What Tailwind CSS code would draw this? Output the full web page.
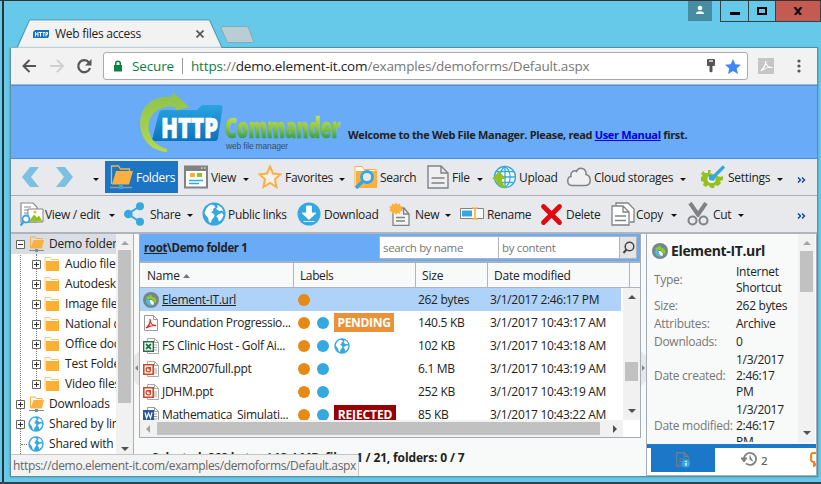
<!DOCTYPE html>
<html lang="en">
<head>
<meta charset="utf-8">
<title>Web files access</title>
<script src="https://cdn.jsdelivr.net/npm/@tailwindcss/browser@4"></script>
</head>
<body class="w-[821px] h-[484px] overflow-hidden bg-[#66c9e9] font-['Open_Sans','Noto_Sans',sans-serif] text-[11.5px] tracking-[-0.2px] text-[#222] whitespace-nowrap">
<svg class="absolute size-0">
  <defs>
    <linearGradient id="gg" gradientUnits="userSpaceOnUse" x1="0" y1="117" x2="0" y2="139"><stop offset="0" stop-color="#c3dc4c"/><stop offset="0.5" stop-color="#8cc63f"/><stop offset="1" stop-color="#2f9a52"/></linearGradient>
    <linearGradient id="ga" x1="0" y1="0" x2="0" y2="1"><stop offset="0" stop-color="#8cc34a"/><stop offset="1" stop-color="#b5d94f"/></linearGradient>
    <linearGradient id="gb" x1="0" y1="0" x2="0" y2="1"><stop offset="0" stop-color="#2aa5e0"/><stop offset="1" stop-color="#0b72bd"/></linearGradient>
  </defs>
  <symbol id="globe" viewBox="0 0 24 24"><circle cx="12" cy="12" r="11.5" fill="#35a8e0"/><path fill="#fff" d="M9 2.500l3 .8 1.500 2-2 1.200-.5 2.200-2 1.800 2 .7 1.700 2-1.200 2.500-1.800 2-.7 3.200-2-1-1-4.200-2.200-2.500L2.500 11 4 7l2.300-2.800zM15.500 2.800l4.200 3 1.800 4-1.800-1.300-2 .8L15.500 8l-1.500-1.500 1.600-1zM17 12l3-1 1.600 2.200-2 4-2.600 2.600-1-3.600-1.800-2z"/></symbol>
  <symbol id="fold" viewBox="0 0 16 16"><path d="M1 14V1.500h5l1.200 2h7.300V5" fill="none" stroke="#fbc477"/><path d="M2 5h13v10H2z" fill="#fcb034"/></symbol>
  <symbol id="netfold" viewBox="0 0 16 16"><path d="M1.500 12V1h5l1 1.500H13v2" fill="none" stroke="#fbb040"/><path d="M4.500 4H15l-2 8.500H1.500z" fill="#fbb040"/><path d="M0 14.500h15" stroke="#8a8a8a"/><path d="M6 13h3v3H6z" fill="#35a8e0"/></symbol>
  <symbol id="plus" viewBox="0 0 9 9"><path d="M.5.5h8v8h-8z" fill="#fff" stroke="#666"/><path d="M2 4.500h5M4.500 2v5" stroke="#333"/></symbol>
  <symbol id="minus" viewBox="0 0 9 9"><path d="M.5.5h8v8h-8z" fill="#fff" stroke="#666"/><path d="M2 4.500h5" stroke="#333"/></symbol>
  <symbol id="caret" viewBox="0 0 6 3"><path d="M0 0h6L3 3z" fill="#111"/></symbol>
  <symbol id="swirl" viewBox="0 0 16 16"><circle cx="8" cy="8" r="8" fill="#78858b"/><path d="M3 5.500L8 2.500 9.500 5c3 0 4.500 3 3.500 6l-3-2-1.500-2H6L5 9z" fill="#86cf2b"/><path d="M2.800 8l2.700-1.500L7 11c.5 1.500 2 2 3.500 2C6.500 15 3 12 2.800 8z" fill="#46bfe8"/><path d="M6.500 8h2l2.500 2.500-.5 2.500c-2 0-3-1-3.500-3z" fill="#fff"/></symbol>
  <symbol id="ppt" viewBox="0 0 16 16"><path d="M4.500.5h7l4 4v11h-11zM11.500.5v4h4M11 8h3M11 10h3M11 12h3" fill="#fff" stroke="#aaa"/><path d="M.8 3.800h9.400v9.400H.8z" fill="#fff" stroke="#d24726" stroke-width="1.600"/><circle cx="5.300" cy="8.700" r="2.200" fill="none" stroke="#d24726" stroke-width="1.300"/><path d="M5.500 8.500V6h2.500v2.500z" fill="#d24726"/></symbol>
</svg>

<div class="relative w-[821px] h-[484px] border-t border-[#333] flex flex-col">
  <div class="absolute left-[2px] top-0 w-[2px] h-[483px] bg-[#2d3436]"></div>
  <div class="absolute left-0 bottom-0 w-full h-[2px] bg-[#33434a]"></div>

  <!-- tab strip -->
  <div class="relative h-[47px] shrink-0">
    <svg class="absolute left-0 top-0" width="821" height="47" viewBox="0 1 821 47">
      <path d="M10 47.500h7L29.500 20h180l12.500 27.500h596" fill="none" stroke="#5792a8"/>
      <path d="M10 48v-.5h8L30 20.500h179L221.500 48z" fill="#f2f2f2"/>
      <path d="M222 26.500h24.500q1.500 0 2 1.500l5 13q.5 1.500-1 1.500H229q-1.500 0-2-1l-6-13.500q-.4-1.500 1-1.500z" fill="#b9cdd5" stroke="#86a9b6"/>
    </svg>
    <div class="relative flex items-center pt-[17px] pl-[33px] h-[49px]">
      <svg class="shrink-0" width="16" height="8" viewBox="0 0 16 8"><path d="M2 0h14v6l-1 2H0V2z" fill="#1473bd"/><path d="M2.500 2v4.500M5 2v4.500M2.500 4H5M6 2.500h3M7.500 2.500v4M9.500 2.500h2.500M10.800 2.500v4M13 6.500v-4h1.500v2H13" fill="none" stroke="#fff"/></svg>
      <div class="w-[141px] shrink-0 pl-[6px] text-[12px] tracking-[-0.27px]">Web files access</div>
      <svg class="ml-[6px]" width="8" height="8" viewBox="0 0 8 8"><path d="M.5.5l7 7M7.500.5l-7 7" stroke="#555" stroke-width="1.700"/></svg>
    </div>
    <div class="absolute left-[688px] top-0 flex">
      <div class="w-[24px] h-[20px] bg-[#468ca3]"><svg width="24" height="20" viewBox="0 0 24 20"><circle cx="12" cy="7" r="2.300" fill="#fff"/><path d="M8 13q0-2.700 4-2.700T16 13z" fill="#fff"/></svg></div>
      <div class="ml-[8px] w-[29px] h-[21px] border border-t-0 border-[#30444c] flex justify-center pt-[11px]"><div class="w-[10px] h-[3px] bg-black"></div></div>
      <div class="w-[26px] h-[21px] border-b border-[#30444c] flex justify-center pt-[6px]"><div class="w-[10px] h-[8px] border-2 border-black"></div></div>
      <div class="w-[46px] h-[21px] border border-t-0 border-[#30444c] bg-[#c55a50] flex justify-center pt-[6px]"><svg width="10" height="8" viewBox="0 0 10 8"><path d="M1.500 0L8 8M8.500 0L2 8" stroke="#111" stroke-width="2.200"/></svg></div>
    </div>
  </div>

  <div class="relative ml-[10px] w-[808px] h-[429px] shrink-0 flex flex-col border-x border-b border-[#5c8fa0] bg-[#f2f2f2] shadow-[0_0_2px_#4b8ba3]">
    <!-- address bar -->
    <div class="h-[37px] shrink-0 flex items-center border-b border-[#b5b5b5]">
      <svg class="ml-[10px]" width="84" height="20" viewBox="21 0 84 20"><path d="M36 10H24M29.500 4L23.500 10l6 6" fill="none" stroke="#555" stroke-width="2"/><path d="M50 10h12M57 4l6 6-6 6" fill="none" stroke="#d0d0d0" stroke-width="2"/><path d="M89 6.500A6 6 0 1 0 90 12" fill="none" stroke="#555" stroke-width="2.200"/><path d="M91.500 3v6.500H85z" fill="#555"/></svg>
      <div class="-ml-[2px] w-[645px] h-[28px] rounded-[3px] border border-[#aaa] bg-white flex items-center text-[13.5px] tracking-[-0.17px]">
        <svg class="ml-[9px]" width="10" height="12" viewBox="0 0 10 12"><path d="M1 5h8v6.500H1z" fill="#0b8043"/><path d="M2.700 6V3.500a2.300 2.300 0 0 1 4.600 0V6" fill="none" stroke="#0b8043" stroke-width="1.500"/></svg>
        <span class="ml-[9px] w-[50px] text-[#0b8043] tracking-[-0.15px]">Secure</span>
        <div class="w-px h-[16px] bg-[#999]"></div>
        <span class="ml-[8px] w-[515px] text-[#777]"><span class="text-[#0b8043]">https</span>://<span class="text-[#222]">demo.element-it.com</span>/examples/demoforms/Default.aspx</span>
        <svg width="10" height="14" viewBox="0 0 10 14"><path d="M2 0h6q1 0 1 1v5q0 1-1 1H6.500v5.500L5 13.500l-1.500-1V7H2Q1 7 1 6V1q0-1 1-1z" fill="#555"/><path d="M3 2h4" stroke="#fff" stroke-width="1.300"/></svg>
        <svg class="ml-[9px]" width="16" height="15" viewBox="0 0 16 15"><path d="M8 0l2.300 5.300 5.700.5-4.300 3.700 1.300 5.500-5-3-5 3 1.300-5.500L0 5.800l5.700-.5z" fill="#4285f4"/></svg>
      </div>
      <svg class="ml-[10px]" width="16" height="16" viewBox="0 0 16 16"><path d="M0 0h16v16H0z" fill="#c5c5c5"/><path d="M3 13c2-2 5-6 4.500-10 .5 5 4 7 6 6.500-3-.8-7 1-10.500 3.500z" fill="none" stroke="#fff" stroke-width="1.100"/></svg>
      <svg class="ml-[23px]" width="4" height="14" viewBox="0 0 4 14"><circle cx="2" cy="2" r="1.600" fill="#555"/><circle cx="2" cy="7" r="1.600" fill="#555"/><circle cx="2" cy="12" r="1.600" fill="#555"/></svg>
    </div>

    <!-- banner -->
    <div class="h-[74px] shrink-0 bg-[#6aabf7] border-y border-[#3f92ee] flex items-start">
      <svg class="ml-[128px] mt-[5px] shrink-0" width="202" height="66" viewBox="139 91 202 66">
        <path d="M167 152C139 150 134 118 147 105c7-7 16-9 25-8l1-5 16 15-14 4 1-4c-12-2-24 3-27 15-3 13 6 24 18 27z" fill="url(#ga)"/>
        <path d="M159 113q1-3 4-3h34l5-5h18q3 0 2.500 3l-4.500 30q-.5 3-3 3h-60q-3 0-2.500-3z" fill="url(#gb)"/>
        <text x="161" y="138" textLength="57" lengthAdjust="spacingAndGlyphs" font-family="Open Sans" font-weight="800" font-size="29" fill="#fff" stroke="#fff" stroke-width=".6">HTTP</text>
        <text x="225" y="138" textLength="115" lengthAdjust="spacingAndGlyphs" font-family="Open Sans" font-weight="800" font-size="28" fill="url(#gg)" stroke="url(#gg)" stroke-width=".6">Commander</text>
        <text x="226" y="148.500" textLength="62" lengthAdjust="spacingAndGlyphs" font-family="Liberation Sans" font-size="9" fill="#3c5064">web file manager</text>
      </svg>
      <div class="ml-[7px] mt-[41px] leading-[16px] font-bold text-[11px] tracking-[-0.33px]">Welcome to the Web File Manager. Please, read <span class="underline text-[#0000e0]">User Manual</span> first.</div>
    </div>

    <!-- toolbar, first row -->
    <div class="h-[36px] shrink-0 bg-[#e8e9ec] flex items-center text-[12px] tracking-[-0.3px] [&>*]:shrink-0 [&_span]:pt-[2px]">
      <svg class="ml-[10px]" width="54" height="22" viewBox="0 0 54 22"><path d="M1 11L9 1h9l-8 10 8 10H9z" fill="#7cc0e4"/><path d="M35 1h9l8 10-8 10h-9l8-10z" fill="#7cc0e4"/></svg>
      <svg class="ml-[18px] mt-[4px]" width="6" height="3"><use href="#caret"/></svg>
      <div class="ml-[6px] w-[73px] h-[32px] bg-[#1b75c4] text-white flex items-center">
        <svg class="ml-[5px]" width="24" height="24" viewBox="0 0 24 24"><path d="M1.500 19V1h7l2 3h9v3" fill="none" stroke="#fbb040" stroke-width="1.300"/><path d="M6 6h17l-4 13.500H2z" fill="#fbb040"/><path d="M0 22.500h22" stroke="#999" stroke-width="1.500"/><path d="M9 20h4v4H9z" fill="#35a8e0"/></svg>
        <span class="ml-[2px]">Folders</span>
      </div>
      <svg class="ml-[6px]" width="24" height="24" viewBox="0 0 24 24"><path d="M1 1.500h22v21H1z" fill="#fff" stroke="#808285" stroke-width="2"/><path d="M0 1h24v5H0z" fill="#808285"/><path d="M17 3h1.500M20 3h1.500" stroke="#fff"/><path d="M6 8h5v4H6z" fill="#fbb040"/><path d="M13 8h5v4h-5z" fill="#95c11f"/><path d="M5 15.500h14M5 18.500h10" stroke="#35a8e0" stroke-width="1.500"/></svg>
      <span class="ml-[3px] w-[32px]">View</span><svg class="mt-[4px]" width="6" height="3"><use href="#caret"/></svg>
      <svg class="ml-[9px]" width="24" height="24" viewBox="0 0 24 24"><path d="M12 1.500l3 7 7.500.8-5.500 5 1.500 7.700-6.500-4-6.500 4L7 14.300l-5.500-5L9 8.500z" fill="#f4f0ea" stroke="#fbb040" stroke-width="2"/></svg>
      <span class="ml-[3px] w-[54px]">Favorites</span><svg class="mt-[4px]" width="6" height="3"><use href="#caret"/></svg>
      <svg class="ml-[9px]" width="24" height="24" viewBox="0 0 24 24"><path d="M1 22V1.500h7l2 3h12v3" fill="#fff" stroke="#fbb040"/><path d="M2 6h21v17H2z" fill="#fbb040"/><circle cx="13" cy="12" r="5.500" fill="#e8e9ec" stroke="#35a8e0" stroke-width="2.800"/><path d="M8.500 16.500L2 23" stroke="#35a8e0" stroke-width="3.500"/></svg>
      <span class="ml-[2px] w-[46px]">Search</span>
      <svg width="24" height="24" viewBox="0 0 24 24"><path d="M2 1h13l7 7v15H2zM15 1v7h7M5.500 13h13M5.500 18h13" fill="#efeff1" stroke="#808285" stroke-width="1.400"/></svg>
      <span class="ml-[2px] w-[25px]">File</span><svg class="mt-[4px]" width="6" height="3"><use href="#caret"/></svg>
      <svg class="ml-[9px]" width="24" height="24" viewBox="0 0 24 24"><circle cx="13" cy="12" r="10.500" fill="#fff" stroke="#35a8e0" stroke-width="1.400"/><path d="M13 1.500v21M2.500 12h21M4 6.500h18M4 17.500h18M13 1.500c-7 5-7 16 0 21 7-5 7-16 0-21z" fill="none" stroke="#35a8e0" stroke-width="1.300"/><path d="M7 6l7 8h-4c0 4 2 7 5 9C8 23 4 19 4 14H0z" fill="#95c11f"/></svg>
      <span class="ml-[3px] w-[48px]">Upload</span>
      <svg width="24" height="24" viewBox="0 0 24 24"><path d="M5 20.500C-1 20 0 12 4 11.500 3 6 8 5 9.500 6.500c2-5 10-4 9.500 3 5 1 6 10 0 11z" fill="#f0f0f2" stroke="#808285" stroke-width="1.500"/></svg>
      <span class="ml-[3px] w-[86px]">Cloud storages</span><svg class="mt-[4px]" width="6" height="3"><use href="#caret"/></svg>
      <svg class="ml-[15px]" width="24" height="24" viewBox="0 0 24 24"><path d="M9 8l1-3H7v3H4L2 6 0 9l2 2-2 1v4l3 1-1 3 3 2 2-2 3 3h3l1-3 3 1 3-3-1-2 3-1v-4l-3 1" fill="#95c11f"/><circle cx="10.500" cy="14" r="4" fill="#fff"/><path d="M10.500 14L23 1.500" stroke="#35a8e0" stroke-width="3.300"/><path d="M7.500 10l.5 5 5 1 2-4-2.500-2z" fill="#35a8e0"/></svg>
      <span class="ml-[3px] w-[49px]">Settings</span><svg class="mt-[4px]" width="6" height="3"><use href="#caret"/></svg>
      <svg class="ml-[14px] mt-[5px]" width="9" height="6" viewBox="0 0 9 6"><path d="M1 .5L3.500 3 1 5.500M5 .5L7.500 3 5 5.500" fill="none" stroke="#10418c" stroke-width="1.400"/></svg>
    </div>
    <!-- toolbar, second row -->
    <div class="h-[39px] pb-[1px] shrink-0 bg-[#e8e9ec] border-t border-t-[#a9afb8] border-b-2 border-b-[#b0b5bd] flex items-center text-[12px] tracking-[-0.3px] [&>*]:shrink-0 [&_span]:pt-[2px]">
      <svg class="ml-[9px]" width="24" height="24" viewBox="0 0 24 24"><path d="M1 1h12l4 4v15H1zM4 5h7M4 8h8M4 11h8" fill="#fff" stroke="#8a8a8a" stroke-width="1.200"/><path d="M8 7h15v13H8z" fill="#fff" stroke="#808285"/><path d="M9 19.500l5-7 3 3 2-2 3.500 6z" fill="#95c11f"/><circle cx="15" cy="10" r="1.500" fill="#fbb040"/><circle cx="6" cy="17" r="3.500" fill="#fff" stroke="#35a8e0" stroke-width="1.800"/><path d="M3.500 20L.5 23.500" stroke="#35a8e0" stroke-width="2.300"/></svg>
      <span class="ml-[1px] w-[64px]">View / edit</span><svg class="mt-[4px]" width="6" height="3"><use href="#caret"/></svg>
      <svg class="ml-[9px]" width="24" height="24" viewBox="0 0 24 24"><path d="M16 4L4 12l12 8" fill="none" stroke="#35a8e0" stroke-width="2"/><circle cx="16" cy="4.300" r="4" fill="#35a8e0"/><circle cx="4.300" cy="12" r="4.300" fill="#35a8e0"/><circle cx="16" cy="19.700" r="4" fill="#35a8e0"/></svg>
      <span class="ml-[2px] w-[37px]">Share</span><svg class="mt-[4px]" width="6" height="3"><use href="#caret"/></svg>
      <svg class="ml-[9px]" width="24" height="24"><use href="#globe"/></svg>
      <span class="ml-[2px] w-[69px]">Public links</span>
      <svg width="24" height="24" viewBox="0 0 24 24"><circle cx="12" cy="12" r="11.500" fill="#35a8e0"/><path d="M9.500 4h5v7H19l-7 6.500L5 11h4.500zM6.500 19.500h11" fill="#fff" stroke="#fff" stroke-width=".8"/></svg>
      <span class="ml-[3px] w-[65px]">Download</span>
      <svg width="24" height="24" viewBox="0 0 24 24"><path d="M4 6h11l5 6v11.500H4zM14.500 6v6H20M7 15.500h9M7 19h9" fill="#f5f5f6" stroke="#808285" stroke-width="1.300"/><path d="M7 .5l1.500 2 2.500-1 .3 2.500 2.500.5-1 2.300 1 2.200-2.500.6-.3 2.400-2.500-1L7 13l-1.500-2-2.500 1-.3-2.400L.3 9l1-2.200-1-2.300L2.700 4 3 1.500l2.500 1z" fill="#fbb040"/></svg>
      <span class="ml-[2px] w-[30px]">New</span><svg class="mt-[4px]" width="6" height="3"><use href="#caret"/></svg>
      <svg class="ml-[9px]" width="24" height="24" viewBox="0 0 24 24"><path d="M.5 6.500h23v10H.5z" fill="#fff" stroke="#808285"/><path d="M2 8.500h10v6H2z" fill="#35a8e0"/><path d="M15 6v11M12 6h2.500M15.500 6H18M12 17h2.500M15.500 17H18" stroke="#fbb040" stroke-width="1.600"/></svg>
      <span class="ml-[3px] w-[52px]">Rename</span>
      <svg width="24" height="24" viewBox="0 0 24 24"><path d="M4.500 4.500l16 16M20.500 4.500l-16 16" stroke="#e30613" stroke-width="4.800" stroke-linecap="round"/></svg>
      <span class="ml-[3px] w-[45px]">Delete</span>
      <svg width="24" height="24" viewBox="0 0 24 24"><path d="M5 4V1h12l6 6v13h-4" fill="#fff" stroke="#808285" stroke-width="1.300"/><path d="M1 4h11l6 6v13H1zM12 4v6h6M4 14h11M4 18.500h11" fill="#fff" stroke="#808285" stroke-width="1.300"/></svg>
      <span class="ml-[1px] w-[35px]">Copy</span><svg class="mt-[4px]" width="6" height="3"><use href="#caret"/></svg>
      <svg class="ml-[10px]" width="24" height="24" viewBox="0 0 24 24"><path d="M3 1l9 13M19 1l-9 13" stroke="#808285" stroke-width="4"/><circle cx="5.500" cy="18.500" r="4" fill="#e8e9ec" stroke="#808285" stroke-width="2"/><circle cx="16.500" cy="18.500" r="4" fill="#e8e9ec" stroke="#808285" stroke-width="2"/></svg>
      <span class="ml-[2px] w-[25px]">Cut</span><svg class="mt-[4px]" width="6" height="3"><use href="#caret"/></svg>
      <svg class="ml-[53px] mt-[5px]" width="9" height="6" viewBox="0 0 9 6"><path d="M1 .5L3.500 3 1 5.500M5 .5L7.500 3 5 5.500" fill="none" stroke="#10418c" stroke-width="1.400"/></svg>
    </div>

    <div class="flex-1 min-h-0 flex bg-white">
      <!-- folder tree -->
      <div class="w-[123px] flex border-r border-[#a9b0b8] overflow-hidden">
        <div class="w-[105px] overflow-hidden leading-[20px] text-[12px] tracking-[-0.2px] relative [&>div>*]:shrink-0">
          <div class="absolute left-[9px] top-0 h-[222px] border-l border-dotted border-[#777]"></div>
          <div class="absolute left-[25px] top-[20px] h-[134px] border-l border-dotted border-[#777]"></div>
          <div class="relative h-[20px] flex items-center bg-[#dadde3] pl-[5px]"><svg width="9" height="9"><use href="#minus"/></svg><svg class="ml-[4px]" width="16" height="16"><use href="#netfold"/></svg><span class="ml-[4px]">Demo folder 1</span></div>
          <div class="relative h-[20px] flex items-center pl-[21px]"><svg width="9" height="9"><use href="#plus"/></svg><svg class="ml-[3px]" width="16" height="16"><use href="#fold"/></svg><span class="ml-[5px]">Audio files</span></div>
          <div class="relative h-[20px] flex items-center pl-[21px]"><svg width="9" height="9"><use href="#plus"/></svg><svg class="ml-[3px]" width="16" height="16"><use href="#fold"/></svg><span class="ml-[5px]">Autodesk</span></div>
          <div class="relative h-[20px] flex items-center pl-[21px]"><svg width="9" height="9"><use href="#plus"/></svg><svg class="ml-[3px]" width="16" height="16"><use href="#fold"/></svg><span class="ml-[5px]">Image files</span></div>
          <div class="relative h-[20px] flex items-center pl-[21px]"><svg width="9" height="9"><use href="#plus"/></svg><svg class="ml-[3px]" width="16" height="16"><use href="#fold"/></svg><span class="ml-[5px]">National data</span></div>
          <div class="relative h-[20px] flex items-center pl-[21px]"><svg width="9" height="9"><use href="#plus"/></svg><svg class="ml-[3px]" width="16" height="16"><use href="#fold"/></svg><span class="ml-[5px]">Office documents</span></div>
          <div class="relative h-[20px] flex items-center pl-[21px]"><svg width="9" height="9"><use href="#plus"/></svg><svg class="ml-[3px]" width="16" height="16"><use href="#fold"/></svg><span class="ml-[5px]">Test Folder</span></div>
          <div class="relative h-[20px] flex items-center pl-[21px]"><svg width="9" height="9"><use href="#plus"/></svg><svg class="ml-[3px]" width="16" height="16"><use href="#fold"/></svg><span class="ml-[5px]">Video files</span></div>
          <div class="relative h-[20px] flex items-center pl-[5px]"><svg width="9" height="9"><use href="#plus"/></svg><svg class="ml-[4px]" width="16" height="16"><use href="#netfold"/></svg><span class="ml-[4px]">Downloads</span></div>
          <div class="relative h-[20px] flex items-center pl-[5px]"><svg width="9" height="9"><use href="#plus"/></svg><svg class="ml-[3px]" width="16" height="16"><use href="#globe"/></svg><span class="ml-[5px]">Shared by link</span></div>
          <div class="relative h-[20px] flex items-center pl-[10px]"><div class="w-[6px] border-t border-dotted border-[#777]"></div><svg class="ml-px" width="16" height="16"><use href="#globe"/></svg><span class="ml-[5px]">Shared with you</span></div>
        </div>
        <div class="w-[17px] bg-[#f1f1f1] flex flex-col items-center">
          <svg class="mt-[7px]" width="8" height="4" viewBox="0 0 8 4"><path d="M0 4h8L4 0z" fill="#a3a3a3"/></svg>
          <div class="mt-[5px] w-[13px] h-[153px] bg-[#c1c1c1]"></div>
          <svg class="mt-[44px]" width="8" height="4" viewBox="0 0 8 4"><path d="M0 0h8L4 4z" fill="#505050"/></svg>
        </div>
      </div>
      <div class="w-[5px] bg-[#f8faf9]"><svg class="mt-[117px]" width="5" height="35" viewBox="0 0 5 35"><path d="M5 0L0 5v25l5 5z" fill="#e8e8e8"/><path d="M4 14l-3 3 3 3z" fill="#888"/></svg></div>

      <!-- file list -->
      <div class="w-[502px] flex flex-col bg-[#f8faf9]">
        <div class="h-[204px] flex flex-col border-x border-b border-[#a3abb5] bg-white overflow-hidden">
          <div class="h-[29px] shrink-0 bg-[#6aabf7] border-b-2 border-[#a3b3c6] flex items-center">
            <div class="ml-[4px] w-[235px] font-bold tracking-[-0.35px] text-[11.5px]"><span class="underline">root</span>\Demo folder 1</div>
            <div class="flex w-[258px] h-[23px] border border-[#b0b5bd] bg-white text-[#777] tracking-[-0.35px]">
              <div class="w-[119px] pl-[3px] leading-[21px] border-r border-[#b0b5bd]">search by name</div>
              <div class="w-[120px] pl-[3px] leading-[21px]">by content</div>
              <div class="w-[17px] bg-[#e4e4e4] border-l border-[#b0b5bd] flex items-center justify-center"><svg class="shrink-0" width="13" height="13" viewBox="0 0 13 13"><circle cx="7.500" cy="5.500" r="4.300" fill="none" stroke="#444" stroke-width="1.500"/><path d="M4.500 8.500L1.500 12" stroke="#444" stroke-width="2"/></svg></div>
            </div>
          </div>
          <div class="h-[25px] shrink-0 flex border-b border-[#b0b5bd] bg-[#f8faf9] leading-[25px] text-[12px] tracking-[-0.2px]">
            <div class="w-[154px] pl-[7px] flex items-center border-r border-[#b0b5bd]">Name <svg class="ml-[3px] mt-[2px]" width="7" height="4" viewBox="0 0 7 4"><path d="M0 4h7L3.500 0z" fill="#777"/></svg></div>
            <div class="w-[122px] pl-[6px] border-r border-[#b0b5bd] tracking-[-0.4px]">Labels</div>
            <div class="w-[72px] pl-[6px] border-r border-[#b0b5bd]">Size</div>
            <div class="w-[142px] pl-[6px] border-r border-[#b0b5bd]">Date modified</div>
          </div>
          <div class="h-[132px] shrink-0 flex">
            <div class="w-[483px] overflow-hidden leading-[23px] text-[12px] tracking-[-0.3px]">
              <div class="flex h-[23px] items-center w-[481px] bg-[#afd2f9]"><svg class="ml-[3px]" width="16" height="16"><use href="#swirl"/></svg><span class="ml-[3px] w-[136px] underline">Element-IT.url</span><span class="size-[12px] rounded-full bg-[#e58a17]"></span><span class="ml-[108px] w-[72px]">262 bytes</span><span>3/1/2017 2:46:17 PM</span></div>
              <div class="flex h-[23px] items-center"><svg class="ml-[4px]" width="15" height="16" viewBox="0 0 15 16"><path d="M.5.5h9l4 4v11H.5zM9.500.5v4h4" fill="#fff" stroke="#999"/><path d="M2 13c3-2 5-6 4-9 0 5 3 7 6 6.500-3-.5-7 .5-10 2.500z" fill="none" stroke="#e2231a" stroke-width="1.200"/></svg><span class="ml-[3px] w-[136px]">Foundation Progressio...</span><span class="size-[12px] rounded-full bg-[#e58a17]"></span><span class="ml-[7px] size-[12px] rounded-full bg-[#35a8e0]"></span><span class="ml-[5px] w-[60px] h-[19px] leading-[19px] bg-[#e8923a] text-white font-bold text-center tracking-[-0.3px]">PENDING</span><span class="ml-[24px] w-[72px]">140.5 KB</span><span>3/1/2017 10:43:17 AM</span></div>
              <div class="flex h-[23px] items-center"><svg class="ml-[3px]" width="16" height="16" viewBox="0 0 16 16"><path d="M4.500.5h7l4 4v11h-11zM11.500.5v4h4M11 7h3M11 9.500h3M11 12h3" fill="#fff" stroke="#aaa"/><path d="M.7 3.700h9.600v9.600H.7z" fill="#fff" stroke="#217346" stroke-width="1.400"/><path d="M3 6l5 5M8 6l-5 5" stroke="#217346" stroke-width="1.800"/></svg><span class="ml-[3px] w-[136px]">FS Clinic Host - Golf Ai...</span><span class="size-[12px] rounded-full bg-[#e58a17]"></span><span class="ml-[7px] size-[12px] rounded-full bg-[#35a8e0]"></span><svg class="ml-[5px]" width="16" height="16"><use href="#globe"/></svg><span class="ml-[68px] w-[72px]">102 KB</span><span>3/1/2017 10:43:18 AM</span></div>
              <div class="flex h-[23px] items-center"><svg class="ml-[3px]" width="16" height="16"><use href="#ppt"/></svg><span class="ml-[3px] w-[136px]">GMR2007full.ppt</span><span class="size-[12px] rounded-full bg-[#e58a17]"></span><span class="ml-[7px] size-[12px] rounded-full bg-[#35a8e0]"></span><span class="ml-[89px] w-[72px]">6.1 MB</span><span>3/1/2017 10:43:19 AM</span></div>
              <div class="flex h-[23px] items-center"><svg class="ml-[3px]" width="16" height="16"><use href="#ppt"/></svg><span class="ml-[3px] w-[136px]">JDHM.ppt</span><span class="size-[12px] rounded-full bg-[#e58a17]"></span><span class="ml-[7px] size-[12px] rounded-full bg-[#35a8e0]"></span><span class="ml-[89px] w-[72px]">252 KB</span><span>3/1/2017 10:43:19 AM</span></div>
              <div class="flex h-[23px] items-center"><svg class="ml-[3px]" width="16" height="16" viewBox="0 0 16 16"><path d="M4.500.5h7l4 4v11h-11zM11.500.5v4h4M11 7h3M11 9.500h3M11 12h3" fill="#fff" stroke="#999"/><path d="M0 3h11v11H0z" fill="#2b579a"/><path d="M2 5.500L3.500 11l2-5 2 5L9 5.500" fill="none" stroke="#fff" stroke-width="1.200"/></svg><span class="ml-[3px] w-[136px]">Mathematica_Simulati...</span><span class="size-[12px] rounded-full bg-[#e58a17]"></span><span class="ml-[7px] size-[12px] rounded-full bg-[#35a8e0]"></span><span class="ml-[5px] w-[62px] h-[19px] leading-[19px] bg-[#990000] text-white font-bold text-center tracking-[-0.1px]">REJECTED</span><span class="ml-[22px] w-[72px]">85 KB</span><span>3/1/2017 10:43:22 AM</span></div>
            </div>
            <div class="w-[17px] bg-[#f1f1f1] flex flex-col items-center">
              <svg class="mt-[7px]" width="8" height="4" viewBox="0 0 8 4"><path d="M0 4h8L4 0z" fill="#505050"/></svg>
              <div class="mt-[63px] w-[13px] h-[19px] bg-[#c1c1c1]"></div>
              <svg class="mt-[28px]" width="8" height="4" viewBox="0 0 8 4"><path d="M0 0h8L4 4z" fill="#505050"/></svg>
            </div>
          </div>
          <div class="h-[17px] w-[483px] shrink-0 bg-[#f1f1f1] flex items-center">
            <svg class="ml-[6px]" width="4" height="8" viewBox="0 0 4 8"><path d="M4 0v8L0 4z" fill="#a3a3a3"/></svg>
            <div class="ml-[7px] w-[443px] h-[13px] bg-[#c1c1c1]"></div>
            <svg class="ml-[13px]" width="4" height="8" viewBox="0 0 4 8"><path d="M0 0v8l4-4z" fill="#505050"/></svg>
          </div>
        </div>
        <div class="h-[38px] pl-[13px] leading-[40px] font-bold text-[12px] tracking-[-0.14px]">Selected: 262 bytes / 18.4 MB, files: 1 / 21, folders: 0 / 7</div>
      </div>
      <div class="w-[5px] bg-[#f8faf9]"><svg class="mt-[117px]" width="5" height="35" viewBox="0 0 5 35"><path d="M0 0l5 5v25l-5 5z" fill="#e8e8e8"/><path d="M1 14l3 3-3 3z" fill="#888"/></svg></div>

      <!-- details -->
      <div class="w-[171px] h-[242px] border border-t-0 border-[#a3abb5] flex flex-col bg-[#f8faf9]">
        <div class="h-[208px] flex shrink-0">
          <div class="w-[151px] overflow-hidden pl-[5px]">
            <div class="flex items-center h-[33px]"><svg class="shrink-0" width="16" height="16"><use href="#swirl"/></svg><span class="ml-[3px] text-[14px] font-bold tracking-[-0.35px]">Element-IT.url</span></div>
            <div class="grid grid-cols-[82px_1fr] gap-y-[2px] pl-[2px] mt-[-3px] items-center leading-[16px] text-[12px] tracking-[-0.28px]">
              <span class="text-[#777]">Type:</span><span>Internet<br>Shortcut</span>
              <span class="text-[#777]">Size:</span><span>262 bytes</span>
              <span class="text-[#777]">Attributes:</span><span>Archive</span>
              <span class="text-[#777]">Downloads:</span><span>0</span>
              <span class="text-[#777]">Date created:</span><span>1/3/2017<br>2:46:17<br>PM</span>
              <span class="text-[#777]">Date modified:</span><span>1/3/2017<br>2:46:17<br>PM</span>
            </div>
          </div>
          <div class="w-[17px] bg-[#f1f1f1] flex flex-col items-center">
            <svg class="mt-[7px]" width="8" height="4" viewBox="0 0 8 4"><path d="M0 4h8L4 0z" fill="#a3a3a3"/></svg>
            <div class="mt-[6px] w-[13px] h-[41px] bg-[#c1c1c1]"></div>
            <svg class="mt-[139px]" width="8" height="4" viewBox="0 0 8 4"><path d="M0 0h8L4 4z" fill="#505050"/></svg>
          </div>
        </div>
        <div class="mt-[2px] h-[4px] shrink-0 bg-[#1b78c8]"></div>
        <div class="flex-1 bg-white flex items-start overflow-hidden">
          <div class="ml-[4px] w-[64px] shrink-0 h-[24px] bg-[#1b78c8] flex items-center justify-center"><svg width="14" height="16" viewBox="0 0 14 16"><path d="M.7.7h7.500l4 4v9.500H.7zM8.200.7v4h4M3 7h6M3 9.500h4M3 12h3" fill="none" stroke="#6e8191" stroke-width="1.200"/><circle cx="10" cy="11.500" r="4" fill="#35a8e0"/><path d="M10 8.800v1.200M10 10.800v3" stroke="#fff" stroke-width="1.300"/></svg></div>
          <svg class="ml-[26px] mt-[4px] shrink-0" width="16" height="14" viewBox="0 0 16 14"><path d="M3 7a6 6 0 1 1 2 4.400" fill="none" stroke="#808080" stroke-width="1.800"/><path d="M0 6h6l-3 4zM9 3.500V7.500l3 1.500" fill="#808080" stroke="#808080"/></svg>
          <span class="ml-[4px] mt-[4px] w-[49px] shrink-0 font-semibold text-[#666]">2</span>
          <svg class="mt-[4px] shrink-0" width="16" height="15" viewBox="0 0 16 15"><path d="M3 1h10q2 0 2 3v3q0 3-2 3H8l-4 4v-4q-3 0-3-3V4q0-3 2-3z" fill="none" stroke="#f58220" stroke-width="2"/></svg>
        </div>
      </div>
    </div>

    <!-- link preview over the page bottom -->
    <div class="absolute left-0 bottom-0 w-[348px] h-[22px] bg-[#f2f2f2] border-t border-r border-[#c4c4c4] rounded-tr-[2px] pl-[2px] leading-[22px] text-[12px] tracking-[-0.34px] text-[#666]">https://demo.element-it.com/examples/demoforms/Default.aspx</div>
  </div>
</div>
</body>
</html>
